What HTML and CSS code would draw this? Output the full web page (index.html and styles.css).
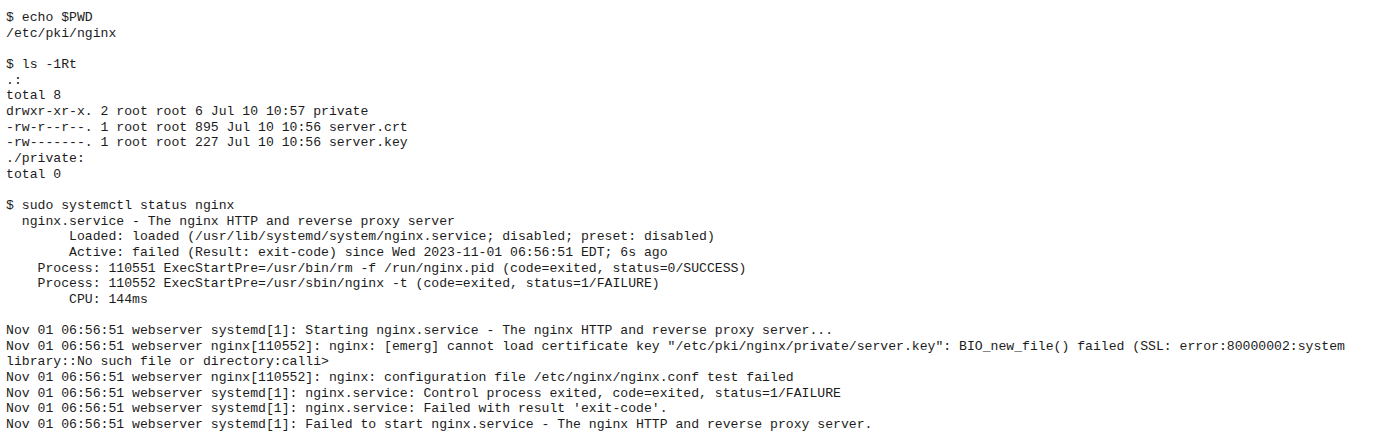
FILE: index.html
```html
<!DOCTYPE html>
<html lang="en">
<head>
<meta charset="utf-8">
<title>Terminal output</title>
<link rel="stylesheet" href="styles.css">
</head>
<body>
<main class="terminal">
<pre class="output">$ echo $PWD
/etc/pki/nginx

$ ls -1Rt
.:
total 8
drwxr-xr-x. 2 root root 6 Jul 10 10:57 private
-rw-r--r--. 1 root root 895 Jul 10 10:56 server.crt
-rw-------. 1 root root 227 Jul 10 10:56 server.key
./private:
total 0

$ sudo systemctl status nginx
  nginx.service - The nginx HTTP and reverse proxy server
        Loaded: loaded (/usr/lib/systemd/system/nginx.service; disabled; preset: disabled)
        Active: failed (Result: exit-code) since Wed 2023-11-01 06:56:51 EDT; 6s ago
    Process: 110551 ExecStartPre=/usr/bin/rm -f /run/nginx.pid (code=exited, status=0/SUCCESS)
    Process: 110552 ExecStartPre=/usr/sbin/nginx -t (code=exited, status=1/FAILURE)
        CPU: 144ms

Nov 01 06:56:51 webserver systemd[1]: Starting nginx.service - The nginx HTTP and reverse proxy server...
Nov 01 06:56:51 webserver nginx[110552]: nginx: [emerg] cannot load certificate key "/etc/pki/nginx/private/server.key": BIO_new_file() failed (SSL: error:80000002:system
library::No such file or directory:calli&gt;
Nov 01 06:56:51 webserver nginx[110552]: nginx: configuration file /etc/nginx/nginx.conf test failed
Nov 01 06:56:51 webserver systemd[1]: nginx.service: Control process exited, code=exited, status=1/FAILURE
Nov 01 06:56:51 webserver systemd[1]: nginx.service: Failed with result 'exit-code'.
Nov 01 06:56:51 webserver systemd[1]: Failed to start nginx.service - The nginx HTTP and reverse proxy server.</pre>
</main>
</body>
</html>
```

FILE: styles.css
```css
html, body {
  margin: 0;
  padding: 0;
  background: #ffffff;
}

.terminal {
  padding: 10px 0 0 6px;
}

.output {
  margin: 0;
  font-family: "Liberation Mono", "Courier New", monospace;
  font-size: 13.13px;
  line-height: 15.65px;
  color: #1c1c1c;
  white-space: pre;
}
```
